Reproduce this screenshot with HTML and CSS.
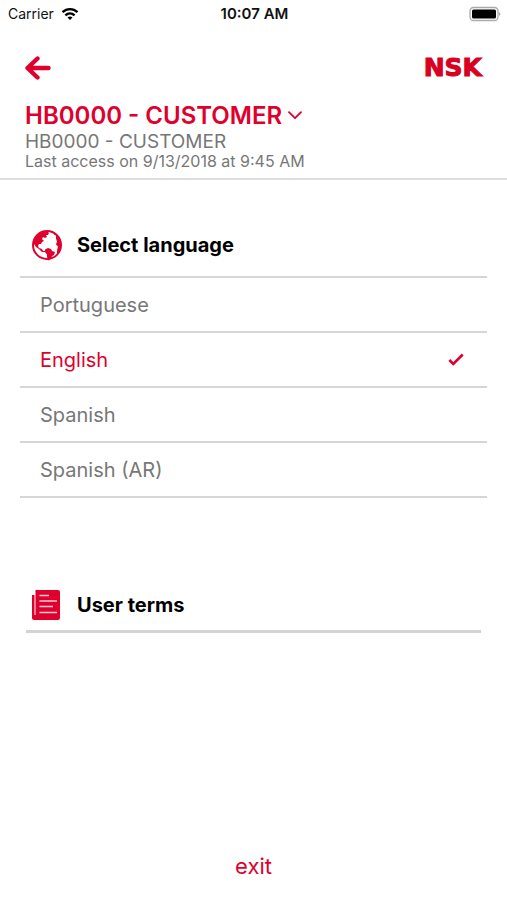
FILE: index.html
```html
<!DOCTYPE html>
<html lang="en">
<head>
<meta charset="utf-8">
<meta name="viewport" content="width=device-width, initial-scale=1">
<title>NSK settings</title>
<link rel="stylesheet" href="styles.css">
</head>
<body>
<div class="status">
  <div class="carrier">Carrier
    <svg width="18" height="14" viewBox="0 0 18 14" fill="none" stroke="#000" stroke-width="2.4"><path d="M1.5 5.2C5.8 1.1 12.2 1.1 16.5 5.2"/><path d="M4.4 8.3c2.7-2.5 6.5-2.5 9.2 0"/><path d="M6.5 10.5c1.5-1.3 3.5-1.3 5 0L9 13z" fill="#000" stroke="none"/></svg>
  </div>
  <time class="clock">10:07 AM</time>
  <svg class="battery" width="32" height="16" viewBox="0 0 32 16"><rect x="1" y="1.5" width="28" height="13" rx="3.5" fill="#fff" stroke="#aaa" stroke-width="1.3"/><rect x="3" y="3.5" width="24" height="9" rx="1.5"/><path d="M30.3 6q2 2 0 4z" fill="#888"/></svg>
</div>
<header class="header">
  <div class="topbar">
    <button class="back" type="button" aria-label="Back"><svg width="26" height="24" viewBox="0 0 26 24" fill="none" stroke="#e0002d" stroke-width="4.4" stroke-linecap="round" stroke-linejoin="round"><path d="M12.5 2.5 2.5 12l10 9.5M3 12h20.5"/></svg></button>
    <span class="logo">NSK</span>
  </div>
  <button class="account" type="button">HB0000 - CUSTOMER
    <svg width="14" height="9" viewBox="0 0 14 9" fill="none" stroke="#e0002d" stroke-width="1.8" stroke-linecap="round" stroke-linejoin="round"><path d="m1 1.2 6 6 6-6"/></svg>
  </button>
  <p class="name">HB0000 - CUSTOMER</p>
  <p class="access">Last access on 9/13/2018 at 9:45 AM</p>
</header>
<main class="main">
  <fieldset class="languages">
    <legend class="heading">
      <svg width="32" height="32" viewBox="0 0 32 32"><circle cx="16" cy="16" r="14" fill="#fff" stroke="#e0002d" stroke-width="2"/><g fill="#e0002d"><path d="M3 12C5 6 9 3 16 2l2 2-1 2-2 0 1 2-2 1-2-1-1 2 2 2-2 1-1 2-2 0-1 2 1 2 3 1 1 2 2 0 0 1-3 0-3-3-3-2-2-3z"/><path d="M14 20.5l3-1.5 3 1 1 2 3 1-1 3-2 1-1 3-3 1.500-1-4 0-2-2-2.500z"/><path d="M23 3.500c5 3 8 8 7 14-1 4-2 6-4 8l0-4 1-4-2-2 1-3-1-3 0-3-2-1z"/></g></svg>
      Select language
    </legend>
    <label class="option"><input type="radio" name="language">Portuguese</label>
    <label class="option"><input type="radio" name="language" checked>English
      <svg class="check" width="16" height="13" viewBox="0 0 16 13" fill="none" stroke="#e0002d" stroke-width="2.6"><path d="m1.3 7 4 4L14.7 1.5"/></svg>
    </label>
    <label class="option"><input type="radio" name="language">Spanish</label>
    <label class="option"><input type="radio" name="language">Spanish (AR)</label>
  </fieldset>
  <a class="terms heading" href="#terms">
    <svg width="32" height="32" viewBox="0 0 32 32"><path fill="#e0002d" d="M4.5 1H27q2 0 2 2v26q0 2-2 2H3q-2 0-2-2V6h2.500v20h1z"/><path d="M8.500 6.500H18M8.500 12H26M8.500 17.500H22M8.500 23.500H26" stroke="#ffd0d8" stroke-width="1.4"/></svg>
    User terms
  </a>
</main>
<footer class="footer"><button class="exit" type="button">exit</button></footer>
</body>
</html>
```
FILE: styles.css
```css
* { box-sizing: border-box; }
body {
  margin: 0;
  min-height: 100vh;
  display: flex;
  flex-direction: column;
  background: #fff;
  color: #777;
  font-family: Inter, "Liberation Sans", sans-serif;
}
button {
  padding: 0;
  border: 0;
  background: none;
  color: #e0002d;
  font: inherit;
  cursor: pointer;
}
svg { flex: none; display: block; }
p { margin: 0; }
.status {
  height: 27px;
  padding: 0 6px 0 8px;
  display: grid;
  grid-template-columns: 1fr auto 1fr;
  align-items: center;
  color: #111;
  font-size: 14px;
}
.carrier { display: flex; align-items: center; gap: 7px; }
.clock { font-size: 15px; font-weight: 600; }
.battery { justify-self: end; }
.header {
  padding: 25px 25px 9px;
  border-bottom: 2px solid #ddd;
}
.topbar {
  height: 32px;
  display: flex;
  align-items: center;
  justify-content: space-between;
}
.logo {
  color: #d9001f;
  font-family: "DejaVu Sans", sans-serif;
  font-size: 25px;
  font-weight: 700;
  line-height: 32px;
  -webkit-text-stroke: 1px #d9001f;
}
.account {
  margin-top: 16px;
  display: flex;
  align-items: center;
  gap: 6px;
  font-size: 24px;
  font-weight: 600;
  line-height: 31px;
}
.name { font-size: 19px; line-height: 22px; }
.access { font-size: 16px; line-height: 16px; }
.main { padding: 48px 20px 0; }
.languages { margin: 0; padding: 0; border: 0; min-width: 0; }
.heading {
  display: flex;
  align-items: center;
  gap: 14px;
  color: #000;
  font-size: 20px;
  font-weight: 700;
  line-height: 34px;
}
.languages .heading {
  width: 100%;
  padding: 0 11px 14px;
  border-bottom: 2px solid #d6d6d6;
}
.option {
  height: 55px;
  padding: 0 23px 0 20px;
  display: flex;
  align-items: center;
  justify-content: space-between;
  border-bottom: 2px solid #d6d6d6;
  font-size: 20px;
  cursor: pointer;
}
.option:has(input:checked) { color: #e0002d; }
.option input { position: absolute; opacity: 0; }
.terms {
  margin: 90px 6px 0;
  padding: 0 5px 8px;
  border-bottom: 3px solid #d3d3d3;
  text-decoration: none;
}
.footer {
  margin-top: auto;
  padding: 16px 0 20px;
  text-align: center;
}
.exit { font-size: 22px; line-height: 28px; }
```
